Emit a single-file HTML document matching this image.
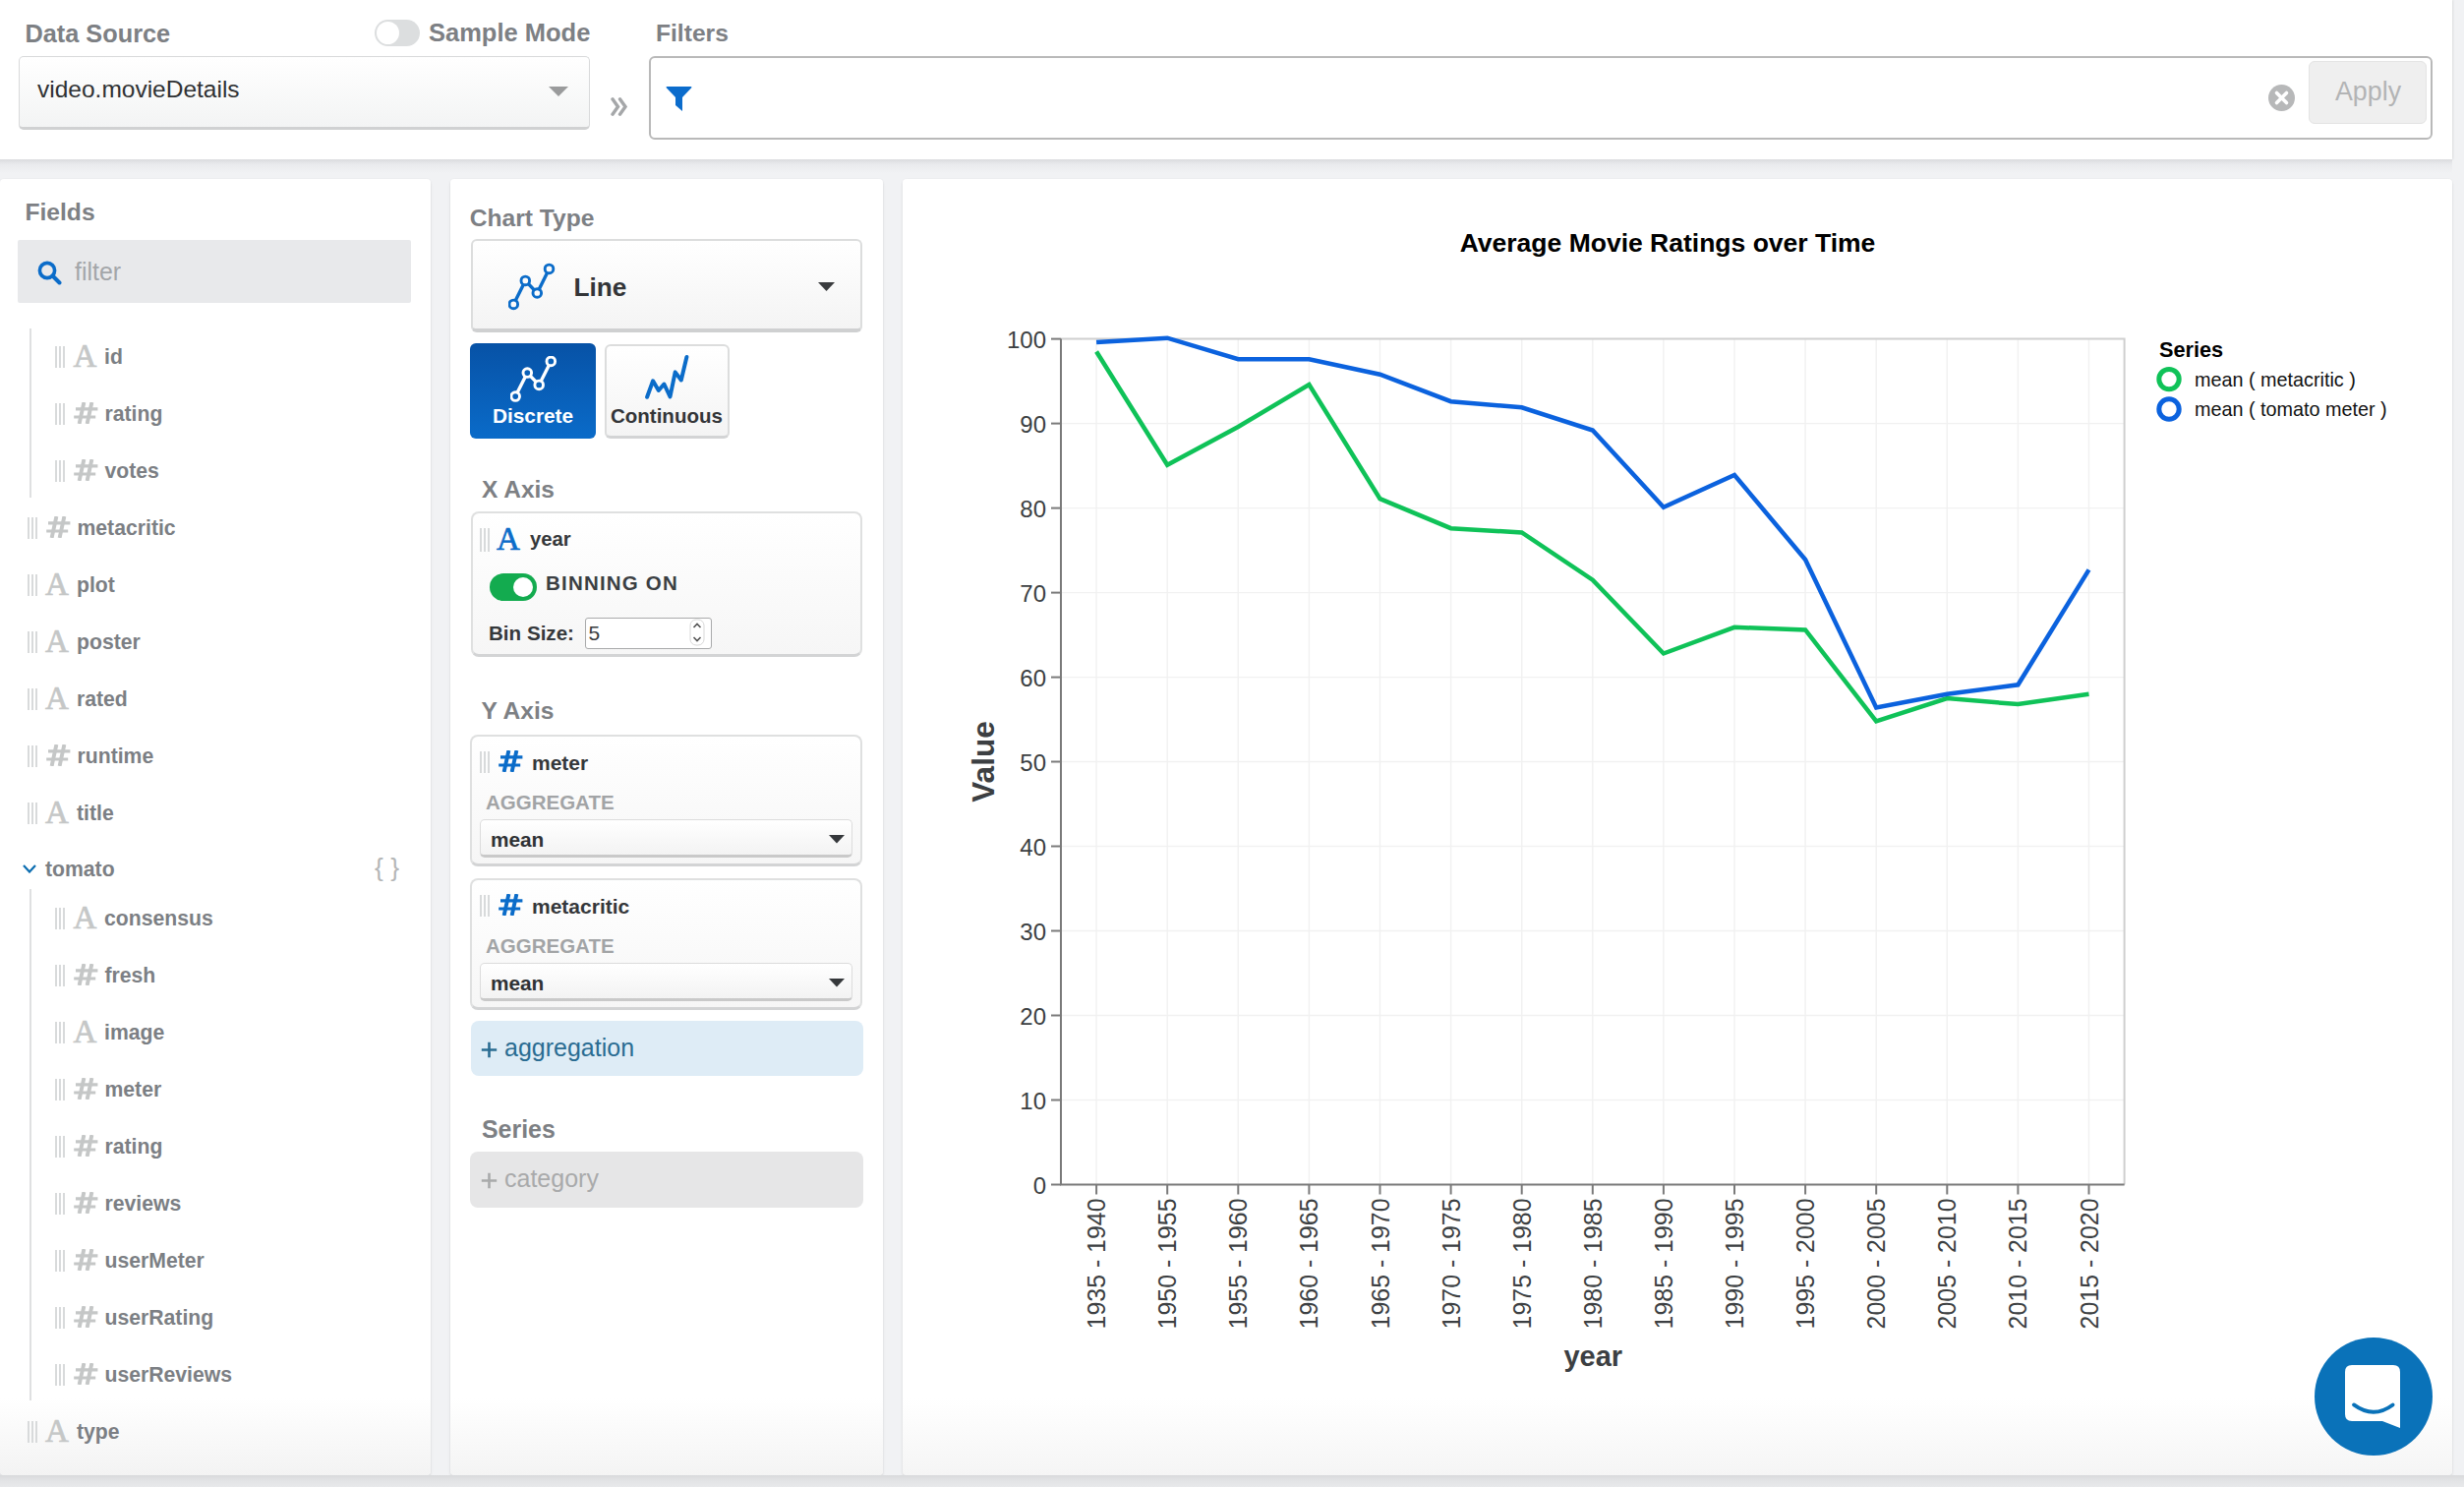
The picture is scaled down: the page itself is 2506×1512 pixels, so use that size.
<!DOCTYPE html>
<html><head><meta charset="utf-8">
<style>
html,body{margin:0;padding:0;}
body{width:2506px;height:1512px;position:relative;overflow:hidden;background:#f1f2f4;font-family:"Liberation Sans",sans-serif;}
.a{position:absolute;}
.t{position:absolute;line-height:1;white-space:nowrap;}
.gl{position:absolute;top:0;width:1.6px;height:100%;background:#d8dadb;}
.panel{position:absolute;background:#fff;border-radius:4px;top:182px;height:1318px;overflow:hidden;box-shadow:0 2px 3px rgba(0,0,0,0.10),0 0 2px rgba(0,0,0,0.05);}
</style></head>
<body>
<div class="a" style="left:0;top:0;width:2494px;height:162px;background:#fff;box-shadow:1px 0 2px rgba(0,0,0,0.09);"></div>
<div class="a" style="left:0;top:162px;width:2494px;height:14px;background:linear-gradient(#dadbde,#e9eaed 35%,#f1f2f4);"></div>
<div class="t" style="left:25.5px;top:21.6px;font-size:25.3px;color:#7d8084;font-weight:bold;">Data Source</div>
<div class="a" style="left:381px;top:20px;width:46px;height:27px;border-radius:14px;background:#dcdedf;"></div>
<div class="a" style="left:383px;top:22px;width:23px;height:23px;border-radius:12px;background:#fff;"></div>
<div class="t" style="left:436px;top:21.4px;font-size:25.5px;color:#7d8084;font-weight:bold;">Sample Mode</div>
<div class="a" style="left:19px;top:57px;width:581px;height:75px;border:1px solid #d9dadb;border-bottom:3px solid #d0d1d2;border-radius:5px;background:linear-gradient(#ffffff,#f3f4f4);box-sizing:border-box;"></div>
<div class="t" style="left:38px;top:79.3px;font-size:24.5px;color:#2f3133;">video.movieDetails</div>
<svg class="a" style="left:558px;top:88px;" width="20" height="11"><path d="M0 0 L20 0 L10 10 Z" fill="#9a9b9c"/></svg>
<svg class="a" style="left:621px;top:99px;" width="18" height="19" viewBox="0 0 18 19"><path d="M2 1.8 L7.5 9.5 L2 17.2 M9.5 1.8 L15 9.5 L9.5 17.2" stroke="#a5a7a9" stroke-width="3.4" fill="none" stroke-linecap="round"/></svg>
<div class="t" style="left:667px;top:22.2px;font-size:24.6px;color:#7d8084;font-weight:bold;">Filters</div>
<div class="a" style="left:660px;top:57px;width:1814px;height:85px;border:2px solid #b9b9b9;border-radius:6px;box-sizing:border-box;background:#fff;"></div>
<svg class="a" style="left:677px;top:88px;" width="27" height="26" viewBox="0 0 27 26"><path d="M0.5 1 Q0.5 0 1.5 0 L25.5 0 Q26.5 0 26.5 1 L17 11 L17 25 L10 19 L10 11 Z" fill="#0b6ccc"/></svg>
<svg class="a" style="left:2307px;top:86px;" width="27" height="27" viewBox="0 0 27 27"><circle cx="13.5" cy="13.5" r="13.5" fill="#b7b8b9"/><path d="M8.5 8.5 L18.5 18.5 M18.5 8.5 L8.5 18.5" stroke="#fff" stroke-width="3.6" stroke-linecap="round"/></svg>
<div class="a" style="left:2348px;top:62px;width:120px;height:64px;border-radius:6px;background:#efefef;border:1px solid #e4e4e4;box-sizing:border-box;"></div>
<div class="t" style="left:2375px;top:80.3px;font-size:26.8px;color:#b3b4b5;">Apply</div>
<div class="panel" style="left:0;width:438px;background:linear-gradient(#fff 1240px,#f3f3f3);"></div>
<div class="panel" style="left:458px;width:440px;background:linear-gradient(#fff 1240px,#f4f4f4);"></div>
<div class="panel" style="left:918px;width:1576px;background:linear-gradient(#fff 1240px,#f5f5f5);"></div>
<div class="a" style="left:0;top:1500px;width:2506px;height:12px;background:linear-gradient(#d9dadc,#e3e4e6 50%,#e8e9eb);"></div>
<div class="t" style="left:25.5px;top:204.2px;font-size:24.6px;color:#7d8084;font-weight:bold;">Fields</div>
<div class="a" style="left:18px;top:244px;width:400px;height:64px;background:#e8e9eb;border-radius:2px;"></div>
<svg class="a" style="left:38px;top:265px;" width="25" height="25" viewBox="0 0 25 25"><circle cx="10" cy="10" r="7.6" stroke="#0b6cc9" stroke-width="3.6" fill="none"/><path d="M15.5 15.5 L22.5 22.5" stroke="#0b6cc9" stroke-width="4" stroke-linecap="round"/></svg>
<div class="t" style="left:76px;top:264.4px;font-size:24.9px;color:#a3a6a9;">filter</div>
<div class="a" style="left:30px;top:334px;width:2px;height:172px;background:#dfe0e1;"></div>
<div class="a" style="left:30px;top:904px;width:2px;height:520px;background:#dfe0e1;"></div>
<div class="a" style="left:56px;top:352px;width:10px;height:22px;"><i class="gl" style="left:0"></i><i class="gl" style="left:4px"></i><i class="gl" style="left:8px"></i></div>
<div class="t" style="left:74.5px;top:345.6px;font-size:33px;color:#c5c7c7;font-family:'Liberation Serif',serif;-webkit-text-stroke:0.7px #c5c7c7;">A</div>
<div class="t" style="left:106px;top:352.1px;font-size:21.2px;color:#7c7f84;font-weight:bold;">id</div>
<div class="a" style="left:56px;top:410px;width:10px;height:22px;"><i class="gl" style="left:0"></i><i class="gl" style="left:4px"></i><i class="gl" style="left:8px"></i></div>
<svg class="a" style="left:75px;top:409px;" width="25" height="22" viewBox="0 0 25 22"><path d="M10.4 0 L5.6 22 M18.4 0 L13.6 22" stroke="#c5c7c7" stroke-width="3.9"/><path d="M2 6.9 L24.4 6.9 M0.2 15 L22.2 15" stroke="#c5c7c7" stroke-width="3.2"/></svg>
<div class="t" style="left:106.5px;top:410.1px;font-size:21.2px;color:#7c7f84;font-weight:bold;">rating</div>
<div class="a" style="left:56px;top:468px;width:10px;height:22px;"><i class="gl" style="left:0"></i><i class="gl" style="left:4px"></i><i class="gl" style="left:8px"></i></div>
<svg class="a" style="left:75px;top:467px;" width="25" height="22" viewBox="0 0 25 22"><path d="M10.4 0 L5.6 22 M18.4 0 L13.6 22" stroke="#c5c7c7" stroke-width="3.9"/><path d="M2 6.9 L24.4 6.9 M0.2 15 L22.2 15" stroke="#c5c7c7" stroke-width="3.2"/></svg>
<div class="t" style="left:106.5px;top:468.1px;font-size:21.2px;color:#7c7f84;font-weight:bold;">votes</div>
<div class="a" style="left:28px;top:526px;width:10px;height:22px;"><i class="gl" style="left:0"></i><i class="gl" style="left:4px"></i><i class="gl" style="left:8px"></i></div>
<svg class="a" style="left:46.5px;top:525px;" width="25" height="22" viewBox="0 0 25 22"><path d="M10.4 0 L5.6 22 M18.4 0 L13.6 22" stroke="#c5c7c7" stroke-width="3.9"/><path d="M2 6.9 L24.4 6.9 M0.2 15 L22.2 15" stroke="#c5c7c7" stroke-width="3.2"/></svg>
<div class="t" style="left:78.5px;top:526.1px;font-size:21.2px;color:#7c7f84;font-weight:bold;">metacritic</div>
<div class="a" style="left:28px;top:584px;width:10px;height:22px;"><i class="gl" style="left:0"></i><i class="gl" style="left:4px"></i><i class="gl" style="left:8px"></i></div>
<div class="t" style="left:46.0px;top:577.6px;font-size:33px;color:#c5c7c7;font-family:'Liberation Serif',serif;-webkit-text-stroke:0.7px #c5c7c7;">A</div>
<div class="t" style="left:78px;top:584.1px;font-size:21.2px;color:#7c7f84;font-weight:bold;">plot</div>
<div class="a" style="left:28px;top:642px;width:10px;height:22px;"><i class="gl" style="left:0"></i><i class="gl" style="left:4px"></i><i class="gl" style="left:8px"></i></div>
<div class="t" style="left:46.0px;top:635.6px;font-size:33px;color:#c5c7c7;font-family:'Liberation Serif',serif;-webkit-text-stroke:0.7px #c5c7c7;">A</div>
<div class="t" style="left:78px;top:642.1px;font-size:21.2px;color:#7c7f84;font-weight:bold;">poster</div>
<div class="a" style="left:28px;top:700px;width:10px;height:22px;"><i class="gl" style="left:0"></i><i class="gl" style="left:4px"></i><i class="gl" style="left:8px"></i></div>
<div class="t" style="left:46.0px;top:693.6px;font-size:33px;color:#c5c7c7;font-family:'Liberation Serif',serif;-webkit-text-stroke:0.7px #c5c7c7;">A</div>
<div class="t" style="left:78px;top:700.1px;font-size:21.2px;color:#7c7f84;font-weight:bold;">rated</div>
<div class="a" style="left:28px;top:758px;width:10px;height:22px;"><i class="gl" style="left:0"></i><i class="gl" style="left:4px"></i><i class="gl" style="left:8px"></i></div>
<svg class="a" style="left:46.5px;top:757px;" width="25" height="22" viewBox="0 0 25 22"><path d="M10.4 0 L5.6 22 M18.4 0 L13.6 22" stroke="#c5c7c7" stroke-width="3.9"/><path d="M2 6.9 L24.4 6.9 M0.2 15 L22.2 15" stroke="#c5c7c7" stroke-width="3.2"/></svg>
<div class="t" style="left:78.5px;top:758.1px;font-size:21.2px;color:#7c7f84;font-weight:bold;">runtime</div>
<div class="a" style="left:28px;top:816px;width:10px;height:22px;"><i class="gl" style="left:0"></i><i class="gl" style="left:4px"></i><i class="gl" style="left:8px"></i></div>
<div class="t" style="left:46.0px;top:809.6px;font-size:33px;color:#c5c7c7;font-family:'Liberation Serif',serif;-webkit-text-stroke:0.7px #c5c7c7;">A</div>
<div class="t" style="left:78px;top:816.1px;font-size:21.2px;color:#7c7f84;font-weight:bold;">title</div>
<div class="a" style="left:56px;top:923px;width:10px;height:22px;"><i class="gl" style="left:0"></i><i class="gl" style="left:4px"></i><i class="gl" style="left:8px"></i></div>
<div class="t" style="left:74.5px;top:916.6px;font-size:33px;color:#c5c7c7;font-family:'Liberation Serif',serif;-webkit-text-stroke:0.7px #c5c7c7;">A</div>
<div class="t" style="left:106px;top:923.1px;font-size:21.2px;color:#7c7f84;font-weight:bold;">consensus</div>
<div class="a" style="left:56px;top:981px;width:10px;height:22px;"><i class="gl" style="left:0"></i><i class="gl" style="left:4px"></i><i class="gl" style="left:8px"></i></div>
<svg class="a" style="left:75px;top:980px;" width="25" height="22" viewBox="0 0 25 22"><path d="M10.4 0 L5.6 22 M18.4 0 L13.6 22" stroke="#c5c7c7" stroke-width="3.9"/><path d="M2 6.9 L24.4 6.9 M0.2 15 L22.2 15" stroke="#c5c7c7" stroke-width="3.2"/></svg>
<div class="t" style="left:106.5px;top:981.1px;font-size:21.2px;color:#7c7f84;font-weight:bold;">fresh</div>
<div class="a" style="left:56px;top:1039px;width:10px;height:22px;"><i class="gl" style="left:0"></i><i class="gl" style="left:4px"></i><i class="gl" style="left:8px"></i></div>
<div class="t" style="left:74.5px;top:1032.6px;font-size:33px;color:#c5c7c7;font-family:'Liberation Serif',serif;-webkit-text-stroke:0.7px #c5c7c7;">A</div>
<div class="t" style="left:106px;top:1039.1px;font-size:21.2px;color:#7c7f84;font-weight:bold;">image</div>
<div class="a" style="left:56px;top:1097px;width:10px;height:22px;"><i class="gl" style="left:0"></i><i class="gl" style="left:4px"></i><i class="gl" style="left:8px"></i></div>
<svg class="a" style="left:75px;top:1096px;" width="25" height="22" viewBox="0 0 25 22"><path d="M10.4 0 L5.6 22 M18.4 0 L13.6 22" stroke="#c5c7c7" stroke-width="3.9"/><path d="M2 6.9 L24.4 6.9 M0.2 15 L22.2 15" stroke="#c5c7c7" stroke-width="3.2"/></svg>
<div class="t" style="left:106.5px;top:1097.1px;font-size:21.2px;color:#7c7f84;font-weight:bold;">meter</div>
<div class="a" style="left:56px;top:1155px;width:10px;height:22px;"><i class="gl" style="left:0"></i><i class="gl" style="left:4px"></i><i class="gl" style="left:8px"></i></div>
<svg class="a" style="left:75px;top:1154px;" width="25" height="22" viewBox="0 0 25 22"><path d="M10.4 0 L5.6 22 M18.4 0 L13.6 22" stroke="#c5c7c7" stroke-width="3.9"/><path d="M2 6.9 L24.4 6.9 M0.2 15 L22.2 15" stroke="#c5c7c7" stroke-width="3.2"/></svg>
<div class="t" style="left:106.5px;top:1155.1px;font-size:21.2px;color:#7c7f84;font-weight:bold;">rating</div>
<div class="a" style="left:56px;top:1213px;width:10px;height:22px;"><i class="gl" style="left:0"></i><i class="gl" style="left:4px"></i><i class="gl" style="left:8px"></i></div>
<svg class="a" style="left:75px;top:1212px;" width="25" height="22" viewBox="0 0 25 22"><path d="M10.4 0 L5.6 22 M18.4 0 L13.6 22" stroke="#c5c7c7" stroke-width="3.9"/><path d="M2 6.9 L24.4 6.9 M0.2 15 L22.2 15" stroke="#c5c7c7" stroke-width="3.2"/></svg>
<div class="t" style="left:106.5px;top:1213.1px;font-size:21.2px;color:#7c7f84;font-weight:bold;">reviews</div>
<div class="a" style="left:56px;top:1271px;width:10px;height:22px;"><i class="gl" style="left:0"></i><i class="gl" style="left:4px"></i><i class="gl" style="left:8px"></i></div>
<svg class="a" style="left:75px;top:1270px;" width="25" height="22" viewBox="0 0 25 22"><path d="M10.4 0 L5.6 22 M18.4 0 L13.6 22" stroke="#c5c7c7" stroke-width="3.9"/><path d="M2 6.9 L24.4 6.9 M0.2 15 L22.2 15" stroke="#c5c7c7" stroke-width="3.2"/></svg>
<div class="t" style="left:106.5px;top:1271.1px;font-size:21.2px;color:#7c7f84;font-weight:bold;">userMeter</div>
<div class="a" style="left:56px;top:1329px;width:10px;height:22px;"><i class="gl" style="left:0"></i><i class="gl" style="left:4px"></i><i class="gl" style="left:8px"></i></div>
<svg class="a" style="left:75px;top:1328px;" width="25" height="22" viewBox="0 0 25 22"><path d="M10.4 0 L5.6 22 M18.4 0 L13.6 22" stroke="#c5c7c7" stroke-width="3.9"/><path d="M2 6.9 L24.4 6.9 M0.2 15 L22.2 15" stroke="#c5c7c7" stroke-width="3.2"/></svg>
<div class="t" style="left:106.5px;top:1329.1px;font-size:21.2px;color:#7c7f84;font-weight:bold;">userRating</div>
<div class="a" style="left:56px;top:1387px;width:10px;height:22px;"><i class="gl" style="left:0"></i><i class="gl" style="left:4px"></i><i class="gl" style="left:8px"></i></div>
<svg class="a" style="left:75px;top:1386px;" width="25" height="22" viewBox="0 0 25 22"><path d="M10.4 0 L5.6 22 M18.4 0 L13.6 22" stroke="#c5c7c7" stroke-width="3.9"/><path d="M2 6.9 L24.4 6.9 M0.2 15 L22.2 15" stroke="#c5c7c7" stroke-width="3.2"/></svg>
<div class="t" style="left:106.5px;top:1387.1px;font-size:21.2px;color:#7c7f84;font-weight:bold;">userReviews</div>
<div class="a" style="left:28px;top:1445px;width:10px;height:22px;"><i class="gl" style="left:0"></i><i class="gl" style="left:4px"></i><i class="gl" style="left:8px"></i></div>
<div class="t" style="left:46.0px;top:1438.6px;font-size:33px;color:#c5c7c7;font-family:'Liberation Serif',serif;-webkit-text-stroke:0.7px #c5c7c7;">A</div>
<div class="t" style="left:78px;top:1445.1px;font-size:21.2px;color:#7c7f84;font-weight:bold;">type</div>
<svg class="a" style="left:23px;top:879px;" width="14" height="9" viewBox="0 0 14 9"><path d="M1 1 L7 7.5 L13 1" stroke="#0b6db0" stroke-width="2.2" fill="none"/></svg>
<div class="t" style="left:46px;top:873.1px;font-size:21.2px;color:#7c7f84;font-weight:bold;">tomato</div>
<div class="t" style="left:381px;top:868.6px;font-size:26.5px;color:#b5b6b7;">{ }</div>
<div class="t" style="left:477.8px;top:209.7px;font-size:24.6px;color:#7d8084;font-weight:bold;">Chart Type</div>
<div class="a" style="left:479px;top:243px;width:398px;height:95px;border:2px solid #dcdddd;border-bottom:4px solid #cfd0d1;border-radius:6px;box-sizing:border-box;background:linear-gradient(#ffffff,#f4f4f4);"></div>
<svg class="a" style="left:517px;top:267px;" width="50" height="50" viewBox="0 0 50 50"><path d="M5.3,42.4 L17.3,18.4 L29.3,31 L41.5,6.4" stroke="#0b6cc9" stroke-width="3.4" fill="none"/><circle cx="5.3" cy="42.4" r="4.3" fill="#fbfbfb" stroke="#0b6cc9" stroke-width="2.9"/><circle cx="17.3" cy="18.4" r="4.3" fill="#fbfbfb" stroke="#0b6cc9" stroke-width="2.9"/><circle cx="29.3" cy="31" r="4.3" fill="#fbfbfb" stroke="#0b6cc9" stroke-width="2.9"/><circle cx="41.5" cy="6.4" r="4.3" fill="#fbfbfb" stroke="#0b6cc9" stroke-width="2.9"/></svg>
<div class="t" style="left:583.5px;top:278.8px;font-size:26.2px;color:#333538;font-weight:bold;">Line</div>
<svg class="a" style="left:832px;top:287px;" width="17" height="10"><path d="M0 0 L17 0 L8.5 9 Z" fill="#3a3c3e"/></svg>
<div class="a" style="left:478px;top:349px;width:128px;height:97px;border-radius:6px;background:linear-gradient(#0752a6,#0a6bc9);"></div>
<svg class="a" style="left:519px;top:362px;" width="50" height="50" viewBox="0 0 50 50"><path d="M5.2,41.1 L17.3,17.1 L29.2,29.4 L41.3,5.4" stroke="#ffffff" stroke-width="3.4" fill="none"/><circle cx="5.2" cy="41.1" r="4.3" fill="#0960b8" stroke="#ffffff" stroke-width="2.9"/><circle cx="17.3" cy="17.1" r="4.3" fill="#0960b8" stroke="#ffffff" stroke-width="2.9"/><circle cx="29.2" cy="29.4" r="4.3" fill="#0960b8" stroke="#ffffff" stroke-width="2.9"/><circle cx="41.3" cy="5.4" r="4.3" fill="#0960b8" stroke="#ffffff" stroke-width="2.9"/></svg>
<div class="t" style="left:501px;top:413.0px;font-size:20.8px;color:#ffffff;font-weight:bold;">Discrete</div>
<div class="a" style="left:615px;top:350px;width:127px;height:96px;border:2px solid #dcdddd;border-bottom:3px solid #d3d4d5;border-radius:6px;box-sizing:border-box;background:linear-gradient(#ffffff,#f4f4f4);"></div>
<svg class="a" style="left:656px;top:360px;" width="46" height="48" viewBox="0 0 46 48"><path d="M2.1 43.8 L8.1 27.3 L13.8 37 L19.4 30.5 L25.5 43.4 L30.7 18.4 L36.8 26.5 L42.4 3" stroke="#0b6cc9" stroke-width="4" fill="none" stroke-linejoin="round" stroke-linecap="round"/></svg>
<div class="t" style="left:621px;top:413.2px;font-size:20.5px;color:#333538;font-weight:bold;">Continuous</div>
<div class="t" style="left:490px;top:485.9px;font-size:24.5px;color:#7d8084;font-weight:bold;">X Axis</div>
<div class="a" style="left:479px;top:520px;width:398px;height:148px;border:2px solid #dfe0e0;border-bottom:3px solid #d3d4d5;border-radius:8px;box-sizing:border-box;background:linear-gradient(#ffffff,#f6f6f6);"></div>
<div class="a" style="left:488px;top:537px;width:10px;height:24px;"><i class="gl" style="left:0"></i><i class="gl" style="left:4px"></i><i class="gl" style="left:8px"></i></div>
<div class="t" style="left:505px;top:531.6px;font-size:33px;color:#0b6cc9;font-family:'Liberation Serif',serif;-webkit-text-stroke:0.7px #0b6cc9;">A</div>
<div class="t" style="left:539px;top:538.3px;font-size:20.3px;color:#35383b;font-weight:bold;">year</div>
<div class="a" style="left:498px;top:583px;width:48px;height:28px;border-radius:14px;background:#13ab4f;"></div>
<div class="a" style="left:522px;top:587px;width:20px;height:20px;border-radius:10px;background:#fff;"></div>
<div class="t" style="left:555px;top:582.9px;font-size:20.5px;color:#3b3f43;font-weight:bold;letter-spacing:1.2px;">BINNING ON</div>
<div class="t" style="left:497px;top:633.6px;font-size:20.6px;color:#35383b;font-weight:bold;">Bin Size:</div>
<div class="a" style="left:595px;top:628px;width:129px;height:32px;border:1.5px solid #a9aaab;border-radius:3px;box-sizing:border-box;background:#fff;"></div>
<div class="t" style="left:598.5px;top:633.2px;font-size:21px;color:#3a3d40;">5</div>
<svg class="a" style="left:701px;top:629px;" width="16" height="28" viewBox="0 0 16 28"><rect x="1" y="1" width="14" height="26" rx="6" fill="#fff" stroke="#d8d8d8" stroke-width="1"/><path d="M4.5 9 L8 5.5 L11.5 9 M4.5 19 L8 22.5 L11.5 19" stroke="#555" stroke-width="1.6" fill="none"/></svg>
<div class="t" style="left:489.6px;top:711.4px;font-size:24.6px;color:#7d8084;font-weight:bold;">Y Axis</div>
<div class="a" style="left:478px;top:747px;width:399px;height:134px;border:2px solid #dfe0e0;border-bottom:3px solid #d3d4d5;border-radius:8px;box-sizing:border-box;background:linear-gradient(#ffffff,#f6f6f6);"></div>
<div class="a" style="left:488px;top:764px;width:10px;height:22px;"><i class="gl" style="left:0"></i><i class="gl" style="left:4px"></i><i class="gl" style="left:8px"></i></div>
<svg class="a" style="left:507px;top:763px;" width="25" height="22" viewBox="0 0 25 22"><path d="M10.4 0 L5.6 22 M18.4 0 L13.6 22" stroke="#0b6cc9" stroke-width="3.9"/><path d="M2 6.9 L24.4 6.9 M0.2 15 L22.2 15" stroke="#0b6cc9" stroke-width="3.2"/></svg>
<div class="t" style="left:541px;top:764.6px;font-size:21px;color:#35383b;font-weight:bold;">meter</div>
<div class="t" style="left:494px;top:805.6px;font-size:20.5px;color:#a2a4a6;font-weight:bold;">AGGREGATE</div>
<div class="a" style="left:488px;top:833px;width:379px;height:39px;border:1.5px solid #dcdcdc;border-bottom:3px solid #c9c9c9;border-radius:5px;box-sizing:border-box;background:linear-gradient(#ffffff,#f3f3f3);"></div>
<div class="t" style="left:499px;top:843.9px;font-size:20.8px;color:#2f3235;font-weight:bold;">mean</div>
<svg class="a" style="left:843px;top:849px;" width="16" height="9"><path d="M0 0 L16 0 L8 8.5 Z" fill="#35383b"/></svg>
<div class="a" style="left:478px;top:893px;width:399px;height:134px;border:2px solid #dfe0e0;border-bottom:3px solid #d3d4d5;border-radius:8px;box-sizing:border-box;background:linear-gradient(#ffffff,#f6f6f6);"></div>
<div class="a" style="left:488px;top:910px;width:10px;height:22px;"><i class="gl" style="left:0"></i><i class="gl" style="left:4px"></i><i class="gl" style="left:8px"></i></div>
<svg class="a" style="left:507px;top:909px;" width="25" height="22" viewBox="0 0 25 22"><path d="M10.4 0 L5.6 22 M18.4 0 L13.6 22" stroke="#0b6cc9" stroke-width="3.9"/><path d="M2 6.9 L24.4 6.9 M0.2 15 L22.2 15" stroke="#0b6cc9" stroke-width="3.2"/></svg>
<div class="t" style="left:541px;top:910.6px;font-size:21px;color:#35383b;font-weight:bold;">metacritic</div>
<div class="t" style="left:494px;top:951.6px;font-size:20.5px;color:#a2a4a6;font-weight:bold;">AGGREGATE</div>
<div class="a" style="left:488px;top:979px;width:379px;height:39px;border:1.5px solid #dcdcdc;border-bottom:3px solid #c9c9c9;border-radius:5px;box-sizing:border-box;background:linear-gradient(#ffffff,#f3f3f3);"></div>
<div class="t" style="left:499px;top:989.9px;font-size:20.8px;color:#2f3235;font-weight:bold;">mean</div>
<svg class="a" style="left:843px;top:995px;" width="16" height="9"><path d="M0 0 L16 0 L8 8.5 Z" fill="#35383b"/></svg>
<div class="a" style="left:479px;top:1038px;width:399px;height:56px;border-radius:8px;background:#deecf6;"></div>
<svg class="a" style="left:489px;top:1059px;" width="17" height="17"><path d="M8.5 0.8 L8.5 16.2 M0.8 8.5 L16.2 8.5" stroke="#2a6c92" stroke-width="2.6"/></svg>
<div class="t" style="left:513px;top:1053.4px;font-size:25px;color:#2a6c92;">aggregation</div>
<div class="t" style="left:490px;top:1135.5px;font-size:24.9px;color:#7d8084;font-weight:bold;">Series</div>
<div class="a" style="left:478px;top:1171px;width:400px;height:57px;border-radius:8px;background:#e6e6e7;"></div>
<svg class="a" style="left:489px;top:1191.5px;" width="17" height="17"><path d="M8.5 0.8 L8.5 16.2 M0.8 8.5 L16.2 8.5" stroke="#a9aaab" stroke-width="2.6"/></svg>
<div class="t" style="left:513px;top:1186.4px;font-size:25px;color:#a9aaab;">category</div>
<svg class="a" style="left:0;top:0;" width="2506" height="1512" viewBox="0 0 2506 1512" font-family="Liberation Sans, sans-serif">
<line x1="1079.0" y1="1204.5" x2="2160.6" y2="1204.5" stroke="#f1f1f1" stroke-width="1.4"/>
<line x1="1079.0" y1="1118.5" x2="2160.6" y2="1118.5" stroke="#f1f1f1" stroke-width="1.4"/>
<line x1="1079.0" y1="1032.5" x2="2160.6" y2="1032.5" stroke="#f1f1f1" stroke-width="1.4"/>
<line x1="1079.0" y1="946.5" x2="2160.6" y2="946.5" stroke="#f1f1f1" stroke-width="1.4"/>
<line x1="1079.0" y1="860.5" x2="2160.6" y2="860.5" stroke="#f1f1f1" stroke-width="1.4"/>
<line x1="1079.0" y1="774.5" x2="2160.6" y2="774.5" stroke="#f1f1f1" stroke-width="1.4"/>
<line x1="1079.0" y1="688.6" x2="2160.6" y2="688.6" stroke="#f1f1f1" stroke-width="1.4"/>
<line x1="1079.0" y1="602.6" x2="2160.6" y2="602.6" stroke="#f1f1f1" stroke-width="1.4"/>
<line x1="1079.0" y1="516.6" x2="2160.6" y2="516.6" stroke="#f1f1f1" stroke-width="1.4"/>
<line x1="1079.0" y1="430.6" x2="2160.6" y2="430.6" stroke="#f1f1f1" stroke-width="1.4"/>
<line x1="1079.0" y1="344.6" x2="2160.6" y2="344.6" stroke="#f1f1f1" stroke-width="1.4"/>
<line x1="1115.1" y1="344.6" x2="1115.1" y2="1204.5" stroke="#f1f1f1" stroke-width="1.4"/>
<line x1="1187.2" y1="344.6" x2="1187.2" y2="1204.5" stroke="#f1f1f1" stroke-width="1.4"/>
<line x1="1259.3" y1="344.6" x2="1259.3" y2="1204.5" stroke="#f1f1f1" stroke-width="1.4"/>
<line x1="1331.4" y1="344.6" x2="1331.4" y2="1204.5" stroke="#f1f1f1" stroke-width="1.4"/>
<line x1="1403.5" y1="344.6" x2="1403.5" y2="1204.5" stroke="#f1f1f1" stroke-width="1.4"/>
<line x1="1475.6" y1="344.6" x2="1475.6" y2="1204.5" stroke="#f1f1f1" stroke-width="1.4"/>
<line x1="1547.7" y1="344.6" x2="1547.7" y2="1204.5" stroke="#f1f1f1" stroke-width="1.4"/>
<line x1="1619.8" y1="344.6" x2="1619.8" y2="1204.5" stroke="#f1f1f1" stroke-width="1.4"/>
<line x1="1691.9" y1="344.6" x2="1691.9" y2="1204.5" stroke="#f1f1f1" stroke-width="1.4"/>
<line x1="1764.0" y1="344.6" x2="1764.0" y2="1204.5" stroke="#f1f1f1" stroke-width="1.4"/>
<line x1="1836.1" y1="344.6" x2="1836.1" y2="1204.5" stroke="#f1f1f1" stroke-width="1.4"/>
<line x1="1908.2" y1="344.6" x2="1908.2" y2="1204.5" stroke="#f1f1f1" stroke-width="1.4"/>
<line x1="1980.3" y1="344.6" x2="1980.3" y2="1204.5" stroke="#f1f1f1" stroke-width="1.4"/>
<line x1="2052.4" y1="344.6" x2="2052.4" y2="1204.5" stroke="#f1f1f1" stroke-width="1.4"/>
<line x1="2124.5" y1="344.6" x2="2124.5" y2="1204.5" stroke="#f1f1f1" stroke-width="1.4"/>
<path d="M1079.0 344.6 L2160.6 344.6 L2160.6 1204.5" stroke="#cfcfcf" stroke-width="2" fill="none"/>
<path d="M1079.0 344.6 L1079.0 1204.5 L2160.6 1204.5" stroke="#7a7a7a" stroke-width="2" fill="none"/>
<line x1="1069" y1="1204.5" x2="1079.0" y2="1204.5" stroke="#7a7a7a" stroke-width="2"/>
<text x="1064" y="1213.5" font-size="24" fill="#3c3f42" text-anchor="end">0</text>
<line x1="1069" y1="1118.5" x2="1079.0" y2="1118.5" stroke="#7a7a7a" stroke-width="2"/>
<text x="1064" y="1127.5" font-size="24" fill="#3c3f42" text-anchor="end">10</text>
<line x1="1069" y1="1032.5" x2="1079.0" y2="1032.5" stroke="#7a7a7a" stroke-width="2"/>
<text x="1064" y="1041.5" font-size="24" fill="#3c3f42" text-anchor="end">20</text>
<line x1="1069" y1="946.5" x2="1079.0" y2="946.5" stroke="#7a7a7a" stroke-width="2"/>
<text x="1064" y="955.5" font-size="24" fill="#3c3f42" text-anchor="end">30</text>
<line x1="1069" y1="860.5" x2="1079.0" y2="860.5" stroke="#7a7a7a" stroke-width="2"/>
<text x="1064" y="869.5" font-size="24" fill="#3c3f42" text-anchor="end">40</text>
<line x1="1069" y1="774.5" x2="1079.0" y2="774.5" stroke="#7a7a7a" stroke-width="2"/>
<text x="1064" y="783.5" font-size="24" fill="#3c3f42" text-anchor="end">50</text>
<line x1="1069" y1="688.6" x2="1079.0" y2="688.6" stroke="#7a7a7a" stroke-width="2"/>
<text x="1064" y="697.6" font-size="24" fill="#3c3f42" text-anchor="end">60</text>
<line x1="1069" y1="602.6" x2="1079.0" y2="602.6" stroke="#7a7a7a" stroke-width="2"/>
<text x="1064" y="611.6" font-size="24" fill="#3c3f42" text-anchor="end">70</text>
<line x1="1069" y1="516.6" x2="1079.0" y2="516.6" stroke="#7a7a7a" stroke-width="2"/>
<text x="1064" y="525.6" font-size="24" fill="#3c3f42" text-anchor="end">80</text>
<line x1="1069" y1="430.6" x2="1079.0" y2="430.6" stroke="#7a7a7a" stroke-width="2"/>
<text x="1064" y="439.6" font-size="24" fill="#3c3f42" text-anchor="end">90</text>
<line x1="1069" y1="344.6" x2="1079.0" y2="344.6" stroke="#7a7a7a" stroke-width="2"/>
<text x="1064" y="353.6" font-size="24" fill="#3c3f42" text-anchor="end">100</text>
<line x1="1115.1" y1="1204.5" x2="1115.1" y2="1214.5" stroke="#7a7a7a" stroke-width="2"/>
<text transform="translate(1124.1,1218.5) rotate(-90)" font-size="24.9" fill="#3c3f42" text-anchor="end">1935 - 1940</text>
<line x1="1187.2" y1="1204.5" x2="1187.2" y2="1214.5" stroke="#7a7a7a" stroke-width="2"/>
<text transform="translate(1196.2,1218.5) rotate(-90)" font-size="24.9" fill="#3c3f42" text-anchor="end">1950 - 1955</text>
<line x1="1259.3" y1="1204.5" x2="1259.3" y2="1214.5" stroke="#7a7a7a" stroke-width="2"/>
<text transform="translate(1268.3,1218.5) rotate(-90)" font-size="24.9" fill="#3c3f42" text-anchor="end">1955 - 1960</text>
<line x1="1331.4" y1="1204.5" x2="1331.4" y2="1214.5" stroke="#7a7a7a" stroke-width="2"/>
<text transform="translate(1340.4,1218.5) rotate(-90)" font-size="24.9" fill="#3c3f42" text-anchor="end">1960 - 1965</text>
<line x1="1403.5" y1="1204.5" x2="1403.5" y2="1214.5" stroke="#7a7a7a" stroke-width="2"/>
<text transform="translate(1412.5,1218.5) rotate(-90)" font-size="24.9" fill="#3c3f42" text-anchor="end">1965 - 1970</text>
<line x1="1475.6" y1="1204.5" x2="1475.6" y2="1214.5" stroke="#7a7a7a" stroke-width="2"/>
<text transform="translate(1484.6,1218.5) rotate(-90)" font-size="24.9" fill="#3c3f42" text-anchor="end">1970 - 1975</text>
<line x1="1547.7" y1="1204.5" x2="1547.7" y2="1214.5" stroke="#7a7a7a" stroke-width="2"/>
<text transform="translate(1556.7,1218.5) rotate(-90)" font-size="24.9" fill="#3c3f42" text-anchor="end">1975 - 1980</text>
<line x1="1619.8" y1="1204.5" x2="1619.8" y2="1214.5" stroke="#7a7a7a" stroke-width="2"/>
<text transform="translate(1628.8,1218.5) rotate(-90)" font-size="24.9" fill="#3c3f42" text-anchor="end">1980 - 1985</text>
<line x1="1691.9" y1="1204.5" x2="1691.9" y2="1214.5" stroke="#7a7a7a" stroke-width="2"/>
<text transform="translate(1700.9,1218.5) rotate(-90)" font-size="24.9" fill="#3c3f42" text-anchor="end">1985 - 1990</text>
<line x1="1764.0" y1="1204.5" x2="1764.0" y2="1214.5" stroke="#7a7a7a" stroke-width="2"/>
<text transform="translate(1773.0,1218.5) rotate(-90)" font-size="24.9" fill="#3c3f42" text-anchor="end">1990 - 1995</text>
<line x1="1836.1" y1="1204.5" x2="1836.1" y2="1214.5" stroke="#7a7a7a" stroke-width="2"/>
<text transform="translate(1845.1,1218.5) rotate(-90)" font-size="24.9" fill="#3c3f42" text-anchor="end">1995 - 2000</text>
<line x1="1908.2" y1="1204.5" x2="1908.2" y2="1214.5" stroke="#7a7a7a" stroke-width="2"/>
<text transform="translate(1917.2,1218.5) rotate(-90)" font-size="24.9" fill="#3c3f42" text-anchor="end">2000 - 2005</text>
<line x1="1980.3" y1="1204.5" x2="1980.3" y2="1214.5" stroke="#7a7a7a" stroke-width="2"/>
<text transform="translate(1989.3,1218.5) rotate(-90)" font-size="24.9" fill="#3c3f42" text-anchor="end">2005 - 2010</text>
<line x1="2052.4" y1="1204.5" x2="2052.4" y2="1214.5" stroke="#7a7a7a" stroke-width="2"/>
<text transform="translate(2061.4,1218.5) rotate(-90)" font-size="24.9" fill="#3c3f42" text-anchor="end">2010 - 2015</text>
<line x1="2124.5" y1="1204.5" x2="2124.5" y2="1214.5" stroke="#7a7a7a" stroke-width="2"/>
<text transform="translate(2133.5,1218.5) rotate(-90)" font-size="24.9" fill="#3c3f42" text-anchor="end">2015 - 2020</text>
<polyline points="1115.1,357.5 1187.2,472.7 1259.3,434.0 1331.4,391.0 1403.5,507.1 1475.6,537.2 1547.7,541.5 1619.8,589.7 1691.9,664.5 1764.0,637.8 1836.1,640.4 1908.2,733.3 1980.3,710.1 2052.4,716.1 2124.5,705.8" stroke="#0fc258" stroke-width="4.5" fill="none" stroke-linejoin="miter"/>
<polyline points="1115.1,348.0 1187.2,343.7 1259.3,365.2 1331.4,365.2 1403.5,380.7 1475.6,408.2 1547.7,414.3 1619.8,437.5 1691.9,515.7 1764.0,483.0 1836.1,569.0 1908.2,719.5 1980.3,705.8 2052.4,696.3 2124.5,579.4" stroke="#0b62de" stroke-width="4.5" fill="none" stroke-linejoin="miter"/>
<text x="1696" y="255.5" font-size="26.5" font-weight="bold" fill="#000" text-anchor="middle">Average Movie Ratings over Time</text>
<text transform="translate(1011,774.5) rotate(-90)" font-size="31.5" font-weight="bold" fill="#3c3f42" text-anchor="middle">Value</text>
<text x="1620.3" y="1389" font-size="29" font-weight="bold" fill="#3c3f42" text-anchor="middle">year</text>
<text x="2196" y="362.5" font-size="21.7" font-weight="bold" fill="#000">Series</text>
<circle cx="2206" cy="385.6" r="10.2" stroke="#0fc258" stroke-width="5" fill="#fff"/>
<circle cx="2206" cy="416" r="10.2" stroke="#0b62de" stroke-width="5" fill="#fff"/>
<text x="2232" y="392.8" font-size="19.8" fill="#111">mean ( metacritic )</text>
<text x="2232" y="423" font-size="19.8" fill="#111">mean ( tomato meter )</text>
</svg>
<div class="a" style="left:2354px;top:1360px;width:120px;height:120px;border-radius:60px;background:#0a72b9;"></div>
<svg class="a" style="left:2385px;top:1388px;" width="58" height="64" viewBox="0 0 58 64"><path d="M7 0 L49 0 Q56 0 56 7 L56 64 L38 57 L7 57 Q0 57 0 50 L0 7 Q0 0 7 0 Z" fill="#fff"/><path d="M9 40.4 Q29 55 48.6 40.4" stroke="#0a72b9" stroke-width="3.8" fill="none" stroke-linecap="round"/></svg>
</body></html>
